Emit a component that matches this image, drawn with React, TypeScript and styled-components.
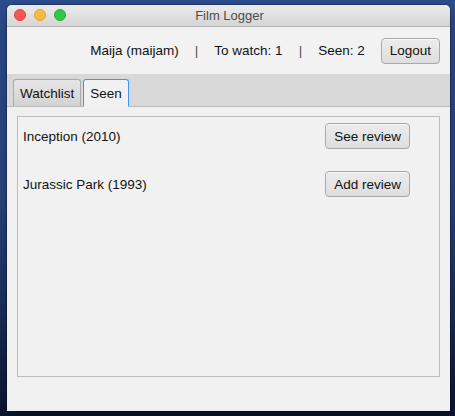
import React from 'react';
import styled, { createGlobalStyle } from 'styled-components';

const GlobalStyle = createGlobalStyle`
  html, body {
    margin: 0;
    padding: 0;
  }
  body {
    width: 455px;
    height: 416px;
    overflow: hidden;
    font-family: "Liberation Sans", Arial, sans-serif;
    background: linear-gradient(180deg, #2d4d90 0%, #2a4886 45%, #1a2f5e 75%, #0a1631 100%);
  }
`;

const Desktop = styled.div`
  padding: 5px 5px 5px 7px;
  box-sizing: border-box;
  width: 455px;
  height: 416px;
`;

const Window = styled.div`
  width: 443px;
  height: 406px;
  display: flex;
  flex-direction: column;
  background: #f0f0f0;
  border-radius: 5px 5px 0 0;
  overflow: hidden;
  box-shadow: 0 0 0 1px rgba(0, 0, 0, 0.25), 0 6px 16px rgba(0, 0, 0, 0.35);
`;

const TitleBar = styled.div`
  position: relative;
  height: 21px;
  flex-shrink: 0;
  display: flex;
  align-items: center;
  justify-content: center;
  background: linear-gradient(180deg, #ebebeb 0%, #d5d5d5 100%);
  border-bottom: 1px solid #b1b1b1;
`;

const TrafficLights = styled.div`
  position: absolute;
  left: 7px;
  top: 4px;
  display: flex;
  gap: 8px;
`;

const Light = styled.span<{ $fill: string; $edge: string }>`
  width: 12px;
  height: 12px;
  border-radius: 50%;
  box-sizing: border-box;
  background: ${({ $fill }) => $fill};
  border: 0.5px solid ${({ $edge }) => $edge};
`;

const TitleText = styled.span`
  font-size: 13px;
  color: #4d4d4d;
  margin-left: 2px;
`;

const Header = styled.div`
  height: 47px;
  flex-shrink: 0;
  display: flex;
  align-items: center;
  justify-content: flex-end;
  gap: 16px;
  padding-right: 10px;
  background: #f2f2f2;
  font-size: 13.5px;
  color: #111;
`;

const HeaderText = styled.span``;

const Separator = styled.span`
  color: #555;
`;

const Button = styled.button`
  height: 26px;
  box-sizing: border-box;
  padding: 0 8px;
  font-family: "Liberation Sans", Arial, sans-serif;
  font-size: 13.5px;
  color: #111;
  background: linear-gradient(180deg, #ececec 0%, #dedede 100%);
  border: 1px solid #a9a9a9;
  border-radius: 4px;
  box-shadow: inset 0 1px 0 rgba(255, 255, 255, 0.6);
  cursor: default;
`;

const TabBar = styled.div`
  height: 33px;
  flex-shrink: 0;
  box-sizing: border-box;
  display: flex;
  align-items: flex-end;
  gap: 2px;
  padding-left: 6px;
  background: #d8d8d8;
  border-bottom: 1px solid #bcbcbc;
`;

const Tab = styled.div<{ $active?: boolean }>`
  box-sizing: border-box;
  display: flex;
  align-items: center;
  padding: 0 6px;
  font-size: 13.5px;
  color: #111;
  border-radius: 3px 3px 0 0;
  margin-bottom: ${({ $active }) => ($active ? '-1px' : '0')};
  height: ${({ $active }) => ($active ? '28px' : '27px')};
  background: ${({ $active }) =>
    $active ? '#f1f1f1' : 'linear-gradient(180deg, #e6e6e6 0%, #d2d2d2 100%)'};
  border: 1px solid ${({ $active }) => ($active ? '#3a97f4' : '#ababab')};
  border-bottom: ${({ $active }) => ($active ? '1px solid #f1f1f1' : 'none')};
`;

const Content = styled.div`
  flex: 1;
  padding: 9px 10px 34px 10px;
  background: #f0f0f0;
`;

const ListPanel = styled.div`
  height: 261px;
  box-sizing: border-box;
  border: 1px solid #bdbdbd;
  background: #f1f1f1;
  padding: 6px 29px 0 5px;
  display: flex;
  flex-direction: column;
  gap: 22px;
`;

const FilmRow = styled.div`
  display: flex;
  align-items: center;
  justify-content: space-between;
  font-size: 13.5px;
  color: #111;
`;

const FilmTitle = styled.span`
  margin-top: 1px;
`;

const films = [
  { title: 'Inception (2010)', action: 'See review' },
  { title: 'Jurassic Park (1993)', action: 'Add review' },
];

export default function App() {
  return (
    <>
      <GlobalStyle />
      <Desktop>
        <Window>
          <TitleBar>
            <TrafficLights>
              <Light $fill="#fc5753" $edge="#df3d39" />
              <Light $fill="#fdbc40" $edge="#de9f33" />
              <Light $fill="#33c748" $edge="#27aa35" />
            </TrafficLights>
            <TitleText>Film Logger</TitleText>
          </TitleBar>
          <Header>
            <HeaderText>Maija (maijam)</HeaderText>
            <Separator>|</Separator>
            <HeaderText>To watch: 1</HeaderText>
            <Separator>|</Separator>
            <HeaderText>Seen: 2</HeaderText>
            <Button>Logout</Button>
          </Header>
          <TabBar>
            <Tab>Watchlist</Tab>
            <Tab $active>Seen</Tab>
          </TabBar>
          <Content>
            <ListPanel>
              {films.map((f) => (
                <FilmRow key={f.title}>
                  <FilmTitle>{f.title}</FilmTitle>
                  <Button>{f.action}</Button>
                </FilmRow>
              ))}
            </ListPanel>
          </Content>
        </Window>
      </Desktop>
    </>
  );
}
